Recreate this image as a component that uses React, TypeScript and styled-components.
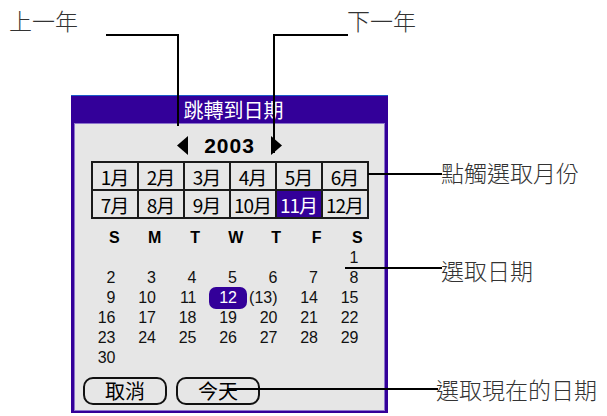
import React from "react";
import styled, { createGlobalStyle } from "styled-components";

const palmBlue = "#330099";
const panelGray = "#e6e6e6";
const cjk = `"Noto Sans CJK TC", "Noto Sans", sans-serif`;

const GlobalStyle = createGlobalStyle`
  html, body {
    margin: 0;
    padding: 0;
    background: #ffffff;
  }
  body {
    font-family: "Liberation Sans", Arial, sans-serif;
  }
`;

type Pos = { $x: number; $y: number };
type LineProps = Pos & { $w: number; $h: number };
type SelectProps = { $selected?: boolean };

const months = Array.from({ length: 12 }, (_, i) => i + 1);
const weekdays = ["S", "M", "T", "W", "T", "F", "S"];
const selectedMonth = 11;
const selectedDay = 12;
const today = 13;

const dayCells: (number | null)[] = [
  ...Array(6).fill(null),
  ...Array.from({ length: 30 }, (_, i) => i + 1),
];

const App: React.FC = (): JSX.Element => {
  return (
    <Page>
      <GlobalStyle />
      <Dialog>
        <TitleBar>跳轉到日期</TitleBar>
        <Content>
          <YearRow>
            <Arrow viewBox="0 0 11 19">
              <polygon points="11,0 0,9.5 11,19" />
            </Arrow>
            <YearText>2003</YearText>
            <Arrow viewBox="0 0 11 19">
              <polygon points="0,0 11,9.5 0,19" />
            </Arrow>
          </YearRow>

          <MonthGrid>
            {months.map((m) => (
              <MonthCell key={m} $selected={m === selectedMonth}>
                {m}月
              </MonthCell>
            ))}
          </MonthGrid>

          <WeekRow>
            {weekdays.map((d, i) => (
              <WeekCell key={i}>{d}</WeekCell>
            ))}
          </WeekRow>

          <DayGrid>
            {dayCells.map((d, i) => (
              <DayCell key={i}>
                {d !== null && (
                  <DayNum $selected={d === selectedDay}>
                    {d === today ? `(${d})` : d}
                  </DayNum>
                )}
              </DayCell>
            ))}
          </DayGrid>

          <ButtonRow>
            <PalmButton>取消</PalmButton>
            <PalmButton>今天</PalmButton>
          </ButtonRow>
        </Content>
      </Dialog>

      {/* callouts */}
      <Label $x={9} $y={7}>上一年</Label>
      <Label $x={347} $y={7}>下一年</Label>
      <Label $x={441} $y={159}>點觸選取月份</Label>
      <Label $x={441} $y={257}>選取日期</Label>
      <Label $x={436} $y={376}>選取現在的日期</Label>

      <Line $x={106} $y={34} $w={73} $h={2} />
      <Line $x={177} $y={34} $w={2} $h={92} />
      <Line $x={273} $y={34} $w={75} $h={2} />
      <Line $x={273} $y={34} $w={2} $h={119} />
      <Line $x={368} $y={173} $w={74} $h={2} />
      <Line $x={345} $y={267} $w={97} $h={2} />
      <Line $x={227} $y={388} $w={211} $h={2} />
    </Page>
  );
};

const Page = styled.div`
  position: relative;
  width: 607px;
  height: 416px;
  box-sizing: border-box;
  padding: 95px 0 0 71px;
  overflow: hidden;
`;

const Dialog = styled.div`
  display: flex;
  flex-direction: column;
  width: 317px;
  height: 318px;
  box-sizing: border-box;
  padding: 0 4px 3px 4px;
  background: ${palmBlue};
  border-top: 1px solid #1a5cc8;
`;

const TitleBar = styled.div`
  display: flex;
  align-items: center;
  justify-content: center;
  height: 28px;
  padding-left: 8px;
  color: #ffffff;
  font-family: ${cjk};
  font-size: 20px;
  line-height: 1;
`;

const Content = styled.div`
  display: flex;
  flex-direction: column;
  flex: 1;
  background: ${panelGray};
  box-shadow: 0 0 0 1px #8c74cc;
`;

const YearRow = styled.div`
  display: flex;
  align-items: center;
  justify-content: center;
  gap: 16px;
  height: 31px;
  padding-top: 6px;
`;

const Arrow = styled.svg`
  display: block;
  width: 11px;
  height: 19px;
  fill: #000000;
`;

const YearText = styled.span`
  font-size: 21px;
  font-weight: bold;
  letter-spacing: 1px;
  color: #000000;
`;

const MonthGrid = styled.div`
  display: grid;
  grid-template-columns: repeat(6, 44px);
  grid-auto-rows: 26px;
  gap: 2px;
  align-self: center;
  padding: 2px;
  background: #1a1a1a;
`;

const MonthCell = styled.div<SelectProps>`
  display: flex;
  align-items: center;
  justify-content: center;
  background: ${({ $selected }) => ($selected ? palmBlue : panelGray)};
  color: ${({ $selected }) => ($selected ? "#ffffff" : "#000000")};
  font-family: ${cjk};
  font-size: 19px;
  line-height: 1;
  letter-spacing: -1px;
`;

const WeekRow = styled.div`
  display: grid;
  grid-template-columns: repeat(7, 40.5px);
  height: 20px;
  margin: 9px 0 0 19px;
`;

const WeekCell = styled.div`
  display: flex;
  align-items: center;
  justify-content: center;
  font-size: 16px;
  font-weight: bold;
  color: #000000;
`;

const DayGrid = styled.div`
  display: grid;
  grid-template-columns: repeat(7, 40.5px);
  grid-auto-rows: 20px;
  margin-left: 2px;
`;

const DayCell = styled.div`
  display: flex;
  align-items: center;
  justify-content: flex-end;
`;

const DayNum = styled.span<SelectProps>`
  display: inline-flex;
  align-items: center;
  height: 22px;
  padding: 0 10px;
  margin-right: -8px;
  border-radius: 7px;
  background: ${({ $selected }) => ($selected ? palmBlue : "transparent")};
  color: ${({ $selected }) => ($selected ? "#ffffff" : "#111111")};
  font-size: 16px;
  white-space: nowrap;
`;

const ButtonRow = styled.div`
  display: flex;
  gap: 9px;
  margin: 9px 0 0 8px;
`;

const PalmButton = styled.div`
  display: flex;
  align-items: center;
  justify-content: center;
  width: 84px;
  height: 28px;
  box-sizing: border-box;
  border: 2px solid #111111;
  border-radius: 10px;
  font-family: ${cjk};
  font-size: 20px;
  color: #000000;
  line-height: 1;
`;

const Label = styled.div<Pos>`
  position: absolute;
  left: ${({ $x }) => $x}px;
  top: ${({ $y }) => $y}px;
  font-family: ${cjk};
  font-size: 23px;
  font-weight: 300;
  line-height: 26px;
  color: #333333;
  white-space: nowrap;
`;

const Line = styled.div<LineProps>`
  position: absolute;
  left: ${({ $x }) => $x}px;
  top: ${({ $y }) => $y}px;
  width: ${({ $w }) => $w}px;
  height: ${({ $h }) => $h}px;
  background: #000000;
`;

export default App;
